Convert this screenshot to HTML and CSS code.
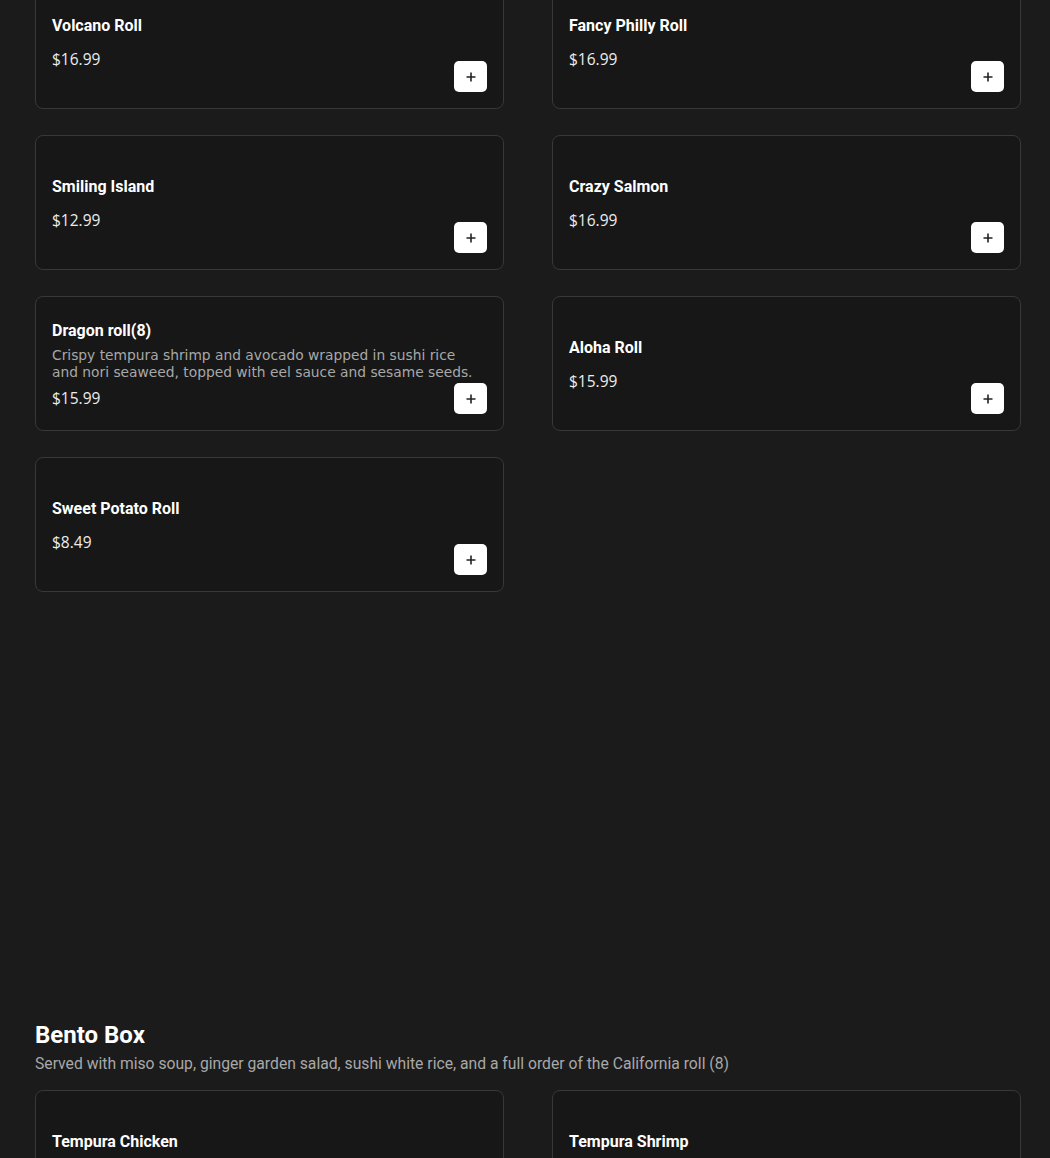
FILE: index.html
```html
<!DOCTYPE html>
<html>
<head>
<meta charset="utf-8">
<link rel="stylesheet" href="styles.css">
</head>
<body>
<div class="page">
  <section class="section first">
    <div class="grid">
      <div class="card"><div class="info"><div class="name">Volcano Roll</div><div class="price">$16.99</div></div><button class="add"><svg width="12" height="12" viewBox="0 0 12 12"><path d="M6 1.5v9M1.5 6h9" stroke="#222" stroke-width="1.6"/></svg></button></div>
      <div class="card"><div class="info"><div class="name">Fancy Philly Roll</div><div class="price">$16.99</div></div><button class="add"><svg width="12" height="12" viewBox="0 0 12 12"><path d="M6 1.5v9M1.5 6h9" stroke="#222" stroke-width="1.6"/></svg></button></div>
      <div class="card"><div class="info"><div class="name">Smiling Island</div><div class="price">$12.99</div></div><button class="add"><svg width="12" height="12" viewBox="0 0 12 12"><path d="M6 1.5v9M1.5 6h9" stroke="#222" stroke-width="1.6"/></svg></button></div>
      <div class="card"><div class="info"><div class="name">Crazy Salmon</div><div class="price">$16.99</div></div><button class="add"><svg width="12" height="12" viewBox="0 0 12 12"><path d="M6 1.5v9M1.5 6h9" stroke="#222" stroke-width="1.6"/></svg></button></div>
      <div class="card"><div class="info"><div class="name">Dragon roll(8)</div><div class="desc">Crispy tempura shrimp and avocado wrapped in sushi rice and nori seaweed, topped with eel sauce and sesame seeds.</div><div class="price">$15.99</div></div><button class="add"><svg width="12" height="12" viewBox="0 0 12 12"><path d="M6 1.5v9M1.5 6h9" stroke="#222" stroke-width="1.6"/></svg></button></div>
      <div class="card"><div class="info"><div class="name">Aloha Roll</div><div class="price">$15.99</div></div><button class="add"><svg width="12" height="12" viewBox="0 0 12 12"><path d="M6 1.5v9M1.5 6h9" stroke="#222" stroke-width="1.6"/></svg></button></div>
      <div class="card"><div class="info"><div class="name">Sweet Potato Roll</div><div class="price">$8.49</div></div><button class="add"><svg width="12" height="12" viewBox="0 0 12 12"><path d="M6 1.5v9M1.5 6h9" stroke="#222" stroke-width="1.6"/></svg></button></div>
    </div>
  </section>
  <section class="section">
    <h2 class="title">Bento Box</h2>
    <p class="subtitle">Served with miso soup, ginger garden salad, sushi white rice, and a full order of the California roll (8)</p>
    <div class="grid">
      <div class="card"><div class="info"><div class="name">Tempura Chicken</div><div class="price">$14.99</div></div><button class="add"><svg width="12" height="12" viewBox="0 0 12 12"><path d="M6 1.5v9M1.5 6h9" stroke="#222" stroke-width="1.6"/></svg></button></div>
      <div class="card"><div class="info"><div class="name">Tempura Shrimp</div><div class="price">$15.99</div></div><button class="add"><svg width="12" height="12" viewBox="0 0 12 12"><path d="M6 1.5v9M1.5 6h9" stroke="#222" stroke-width="1.6"/></svg></button></div>
    </div>
  </section>
</div>
</body>
</html>
```

FILE: styles.css
```css
html, body {
  margin: 0;
  padding: 0;
  background: #1b1b1b;
  height: 1158px;
  overflow: hidden;
}
.page {
  padding: 0 29px 0 35px;
  margin-top: -26px;
}
.section.first {
  min-height: 1046px;
}
.grid {
  display: grid;
  grid-template-columns: 469px 469px;
  column-gap: 48px;
  row-gap: 26px;
}
.card {
  position: relative;
  box-sizing: border-box;
  height: 135px;
  background: #171717;
  border: 1px solid #383838;
  border-radius: 8px;
  padding: 16px;
  display: flex;
  flex-direction: column;
  justify-content: center;
}
.info {
  display: flex;
  flex-direction: column;
}
.name {
  font-family: Roboto, "Liberation Sans", sans-serif;
  font-weight: 700;
  font-size: 16px;
  line-height: 19px;
  color: #ffffff;
}
.desc {
  font-family: "DejaVu Sans", sans-serif;
  font-size: 13.8px;
  line-height: 17px;
  color: #a8a8a8;
  margin-top: 7px;
  max-width: 425px;
}
.price {
  font-family: "Open Sans", sans-serif;
  font-size: 15.5px;
  line-height: 18px;
  color: #ececec;
  margin-top: 15px;
}
.desc + .price {
  margin-top: 8px;
}
.add {
  position: absolute;
  right: 16px;
  bottom: 16px;
  width: 33px;
  height: 31px;
  border: none;
  border-radius: 5px;
  background: #ffffff;
  display: flex;
  align-items: center;
  justify-content: center;
  padding: 0;
}
.title {
  margin: 0;
  font-family: Roboto, "Liberation Sans", sans-serif;
  font-weight: 700;
  font-size: 24px;
  line-height: 30px;
  color: #ffffff;
}
.subtitle {
  margin: 4px 0 16px;
  font-family: Roboto, "Liberation Sans", sans-serif;
  font-size: 15.7px;
  line-height: 20px;
  color: #a8a8a8;
}
```
